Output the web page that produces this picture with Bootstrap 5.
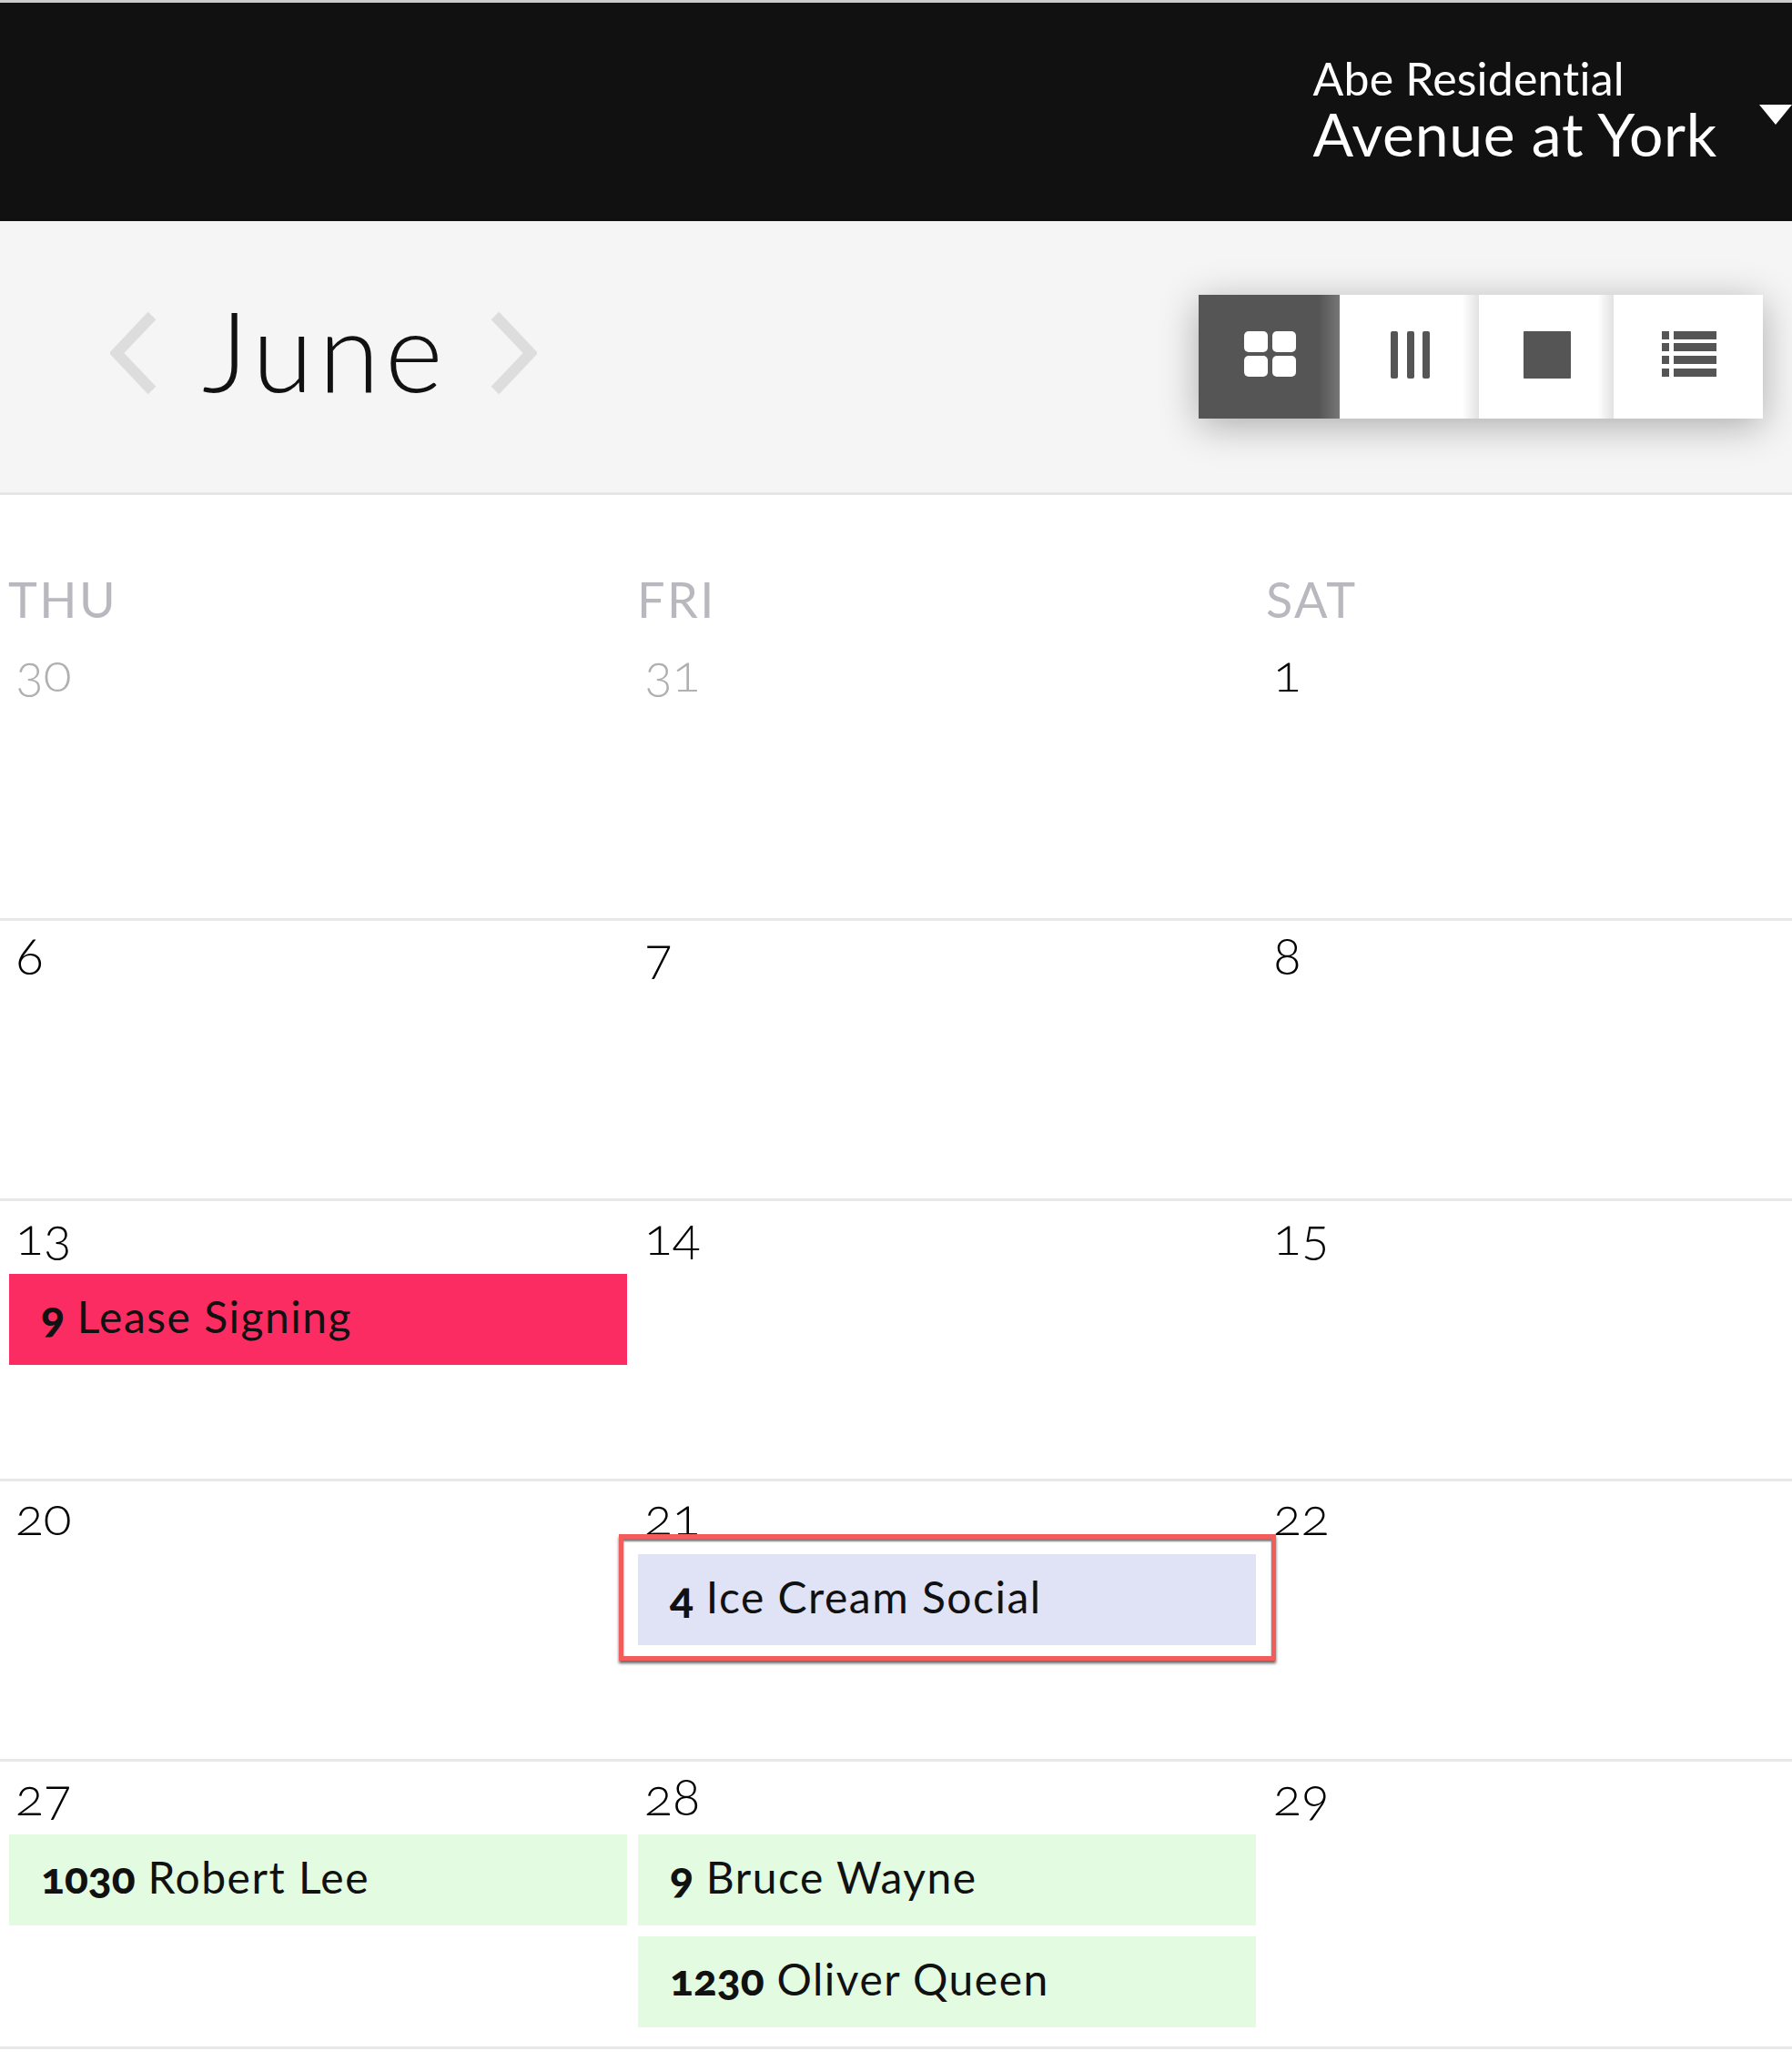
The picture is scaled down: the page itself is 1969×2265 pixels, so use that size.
<!DOCTYPE html>
<html lang="en">
  <head>
    <meta charset="UTF-8" />
    <title>Calendar</title>
    <link rel="stylesheet" href="https://cdn.jsdelivr.net/npm/bootstrap@5.3.6/dist/css/bootstrap.min.css" />
    <style>
      body { font-family: Lato, "Open Sans", sans-serif; font-variant-numeric: oldstyle-nums; font-feature-settings: "onum"; color: #222; background: #fff; overflow-x: hidden; }
      .top-bar { background: #111; border-top: 3px solid #ccc; height: 243px; color: #fff; padding-top: 58px; overflow: hidden; }
      .top-org { font-size: 50px; line-height: 50px; font-weight: 400; letter-spacing: .2px; }
      .top-site { font-size: 66px; line-height: 72px; font-weight: 400; letter-spacing: .7px; }
      .top-caret { width: 0; height: 0; border-left: 18px solid transparent; border-right: 18px solid transparent; border-top: 22px solid #fff; margin-left: 46px; margin-top: 54px; flex: none; }
      .tool-bar { background: #f5f5f5; height: 301px; border-bottom: 3px solid #e6e6e6; padding: 81px 32px 0 121px; }
      .month-name { font-size: 122px; line-height: 100px; font-weight: 300; color: #111; width: 365px; padding-left: 49px; padding-top: 10px; letter-spacing: 6px; }
      .nav-arrow { flex: none; margin-top: 18px; }
      .view-group { box-shadow: 0 8px 40px rgba(0,0,0,.3); border-radius: 0; height: 136px; }
      .view-group .btn { border: 0; border-radius: 0; padding: 40px 0 0 2px; margin: 0 !important; height: 136px; display: flex; justify-content: center; flex: none; }
      .view-on { width: 155px; background: linear-gradient(90deg, #555 85%, #777) !important; }
      .view-two { width: 153px; background: linear-gradient(90deg, #fff 88%, #e2e2e2) !important; }
      .view-three { width: 148px; background: linear-gradient(90deg, #fff 88%, #e2e2e2) !important; }
      .view-four { width: 164px; background: #fff !important; }
      .cal-row { display: grid; grid-template-columns: 691px 691px 1fr; height: 308px; border-bottom: 3px solid #e8e8e8; }
      .cal-row.first-row { height: 468px; padding-top: 83px; }
      .cal-row:last-child { height: 316px; }
      .cal-cell { padding: 0 2px 0 10px; min-width: 0; }
      .dow { font-size: 54px; line-height: 64px; font-weight: 400; color: #b8b8be; margin-bottom: 17px; letter-spacing: 2.4px; margin-left: -1px; }
      .day-num { font-size: 57px; line-height: 60px; font-weight: 300; color: #000; margin-left: 7px; margin-top: 7px; height: 60px; }
      .day-num.muted-day { color: #b0b0b0; }
      .cal-event { height: 100px; line-height: 94px; padding-left: 35px; font-size: 48px; letter-spacing: 1.5px; color: #111; margin-bottom: 12px; white-space: nowrap; }
      .cal-event b { font-weight: 900; letter-spacing: 0; }
      .ev-pink { background: #fb2c62; margin-top: 13px; }
      .ev-blue { background: #e0e3f6; margin: 0; }
      .ev-green { background: #e2fbe1; }
      .ev-mt { margin-top: 13px; }
      .focus-box { position: relative; z-index: 1; border: 5px solid #f25c5a; background: #fff; padding: 17px 17px 12px 16px; margin: -9px -22px 0 -21px; box-shadow: 0 3px 3px rgba(0,0,0,.6), inset 0 3px 2px rgba(0,0,0,.5); }
    </style>
    <script src="https://cdn.jsdelivr.net/npm/bootstrap@5.3.6/dist/js/bootstrap.bundle.min.js"></script>
  </head>
  <body>
    <header class="top-bar d-flex justify-content-end">
      <div>
        <div class="top-org">Abe Residential</div>
        <div class="top-site">Avenue at York</div>
      </div>
      <span class="top-caret"></span>
    </header>

    <section class="tool-bar d-flex justify-content-between align-items-start">
      <div class="d-flex align-items-start">
        <svg class="nav-arrow" width="52" height="92" viewBox="0 0 52 92"><path d="M46 5 L7 46 L46 87" fill="none" stroke="#ddd" stroke-width="12" /></svg>
        <div class="month-name">June</div>
        <svg class="nav-arrow" width="52" height="92" viewBox="0 0 52 92"><path d="M6 5 L45 46 L6 87" fill="none" stroke="#ddd" stroke-width="12" /></svg>
      </div>
      <div class="btn-group view-group" role="group">
        <button type="button" class="btn view-on">
          <svg width="58" height="50" viewBox="0 0 58 50" fill="#fff"><rect x="0" y="0" width="26" height="23" rx="5" /><rect x="31" y="0" width="26" height="23" rx="5" /><rect x="0" y="27" width="26" height="23" rx="5" /><rect x="31" y="27" width="26" height="23" rx="5" /></svg>
        </button>
        <button type="button" class="btn view-two">
          <svg width="44" height="52" viewBox="0 0 44 52" fill="#555"><rect x="0" y="0" width="8" height="52" rx="2" /><rect x="18" y="0" width="8" height="52" rx="2" /><rect x="35" y="0" width="8" height="52" rx="2" /></svg>
        </button>
        <button type="button" class="btn view-three">
          <svg width="52" height="52" viewBox="0 0 52 52" fill="#555"><rect width="52" height="52" rx="1" /></svg>
        </button>
        <button type="button" class="btn view-four">
          <svg width="60" height="50" viewBox="0 0 60 50" fill="#555"><rect x="0" y="0" width="8" height="9" /><rect x="13" y="0" width="47" height="9" /><rect x="0" y="13" width="8" height="9" /><rect x="13" y="13" width="47" height="9" /><rect x="0" y="27" width="8" height="9" /><rect x="13" y="27" width="47" height="9" /><rect x="0" y="41" width="8" height="9" /><rect x="13" y="41" width="47" height="9" /></svg>
        </button>
      </div>
    </section>

    <main id="calendar"></main>

    <script>
      const weeks = [
        [
          { dow: "THU", day: 30, muted: true },
          { dow: "FRI", day: 31, muted: true },
          { dow: "SAT", day: 1 },
        ],
        [{ day: 6 }, { day: 7 }, { day: 8 }],
        [
          { day: 13, events: [{ time: "9", title: "Lease Signing", type: "ev-pink" }] },
          { day: 14 },
          { day: 15 },
        ],
        [
          { day: 20 },
          { day: 21, focus: true, events: [{ time: "4", title: "Ice Cream Social", type: "ev-blue" }] },
          { day: 22 },
        ],
        [
          { day: 27, events: [{ time: "1030", title: "Robert Lee", type: "ev-green ev-mt" }] },
          {
            day: 28,
            events: [
              { time: "9", title: "Bruce Wayne", type: "ev-green ev-mt" },
              { time: "1230", title: "Oliver Queen", type: "ev-green" },
            ],
          },
          { day: 29 },
        ],
      ];

      const calendar = document.querySelector("#calendar");

      weeks.forEach(function (week, i) {
        const row = document.createElement("div");
        row.className = i === 0 ? "cal-row first-row" : "cal-row";

        week.forEach(function (cell) {
          const col = document.createElement("div");
          col.className = "cal-cell";
          let html = "";
          if (cell.dow) html += `<div class="dow">${cell.dow}</div>`;
          html += `<div class="day-num ${cell.muted ? "muted-day" : ""}">${cell.day}</div>`;
          const events = (cell.events || []).map(function (ev) {
            return `<div class="cal-event ${ev.type}"><b>${ev.time}</b> ${ev.title}</div>`;
          }).join("");
          html += cell.focus ? `<div class="focus-box">${events}</div>` : events;
          col.innerHTML = html;
          row.appendChild(col);
        });

        calendar.appendChild(row);
      });
    </script>
  </body>
</html>
